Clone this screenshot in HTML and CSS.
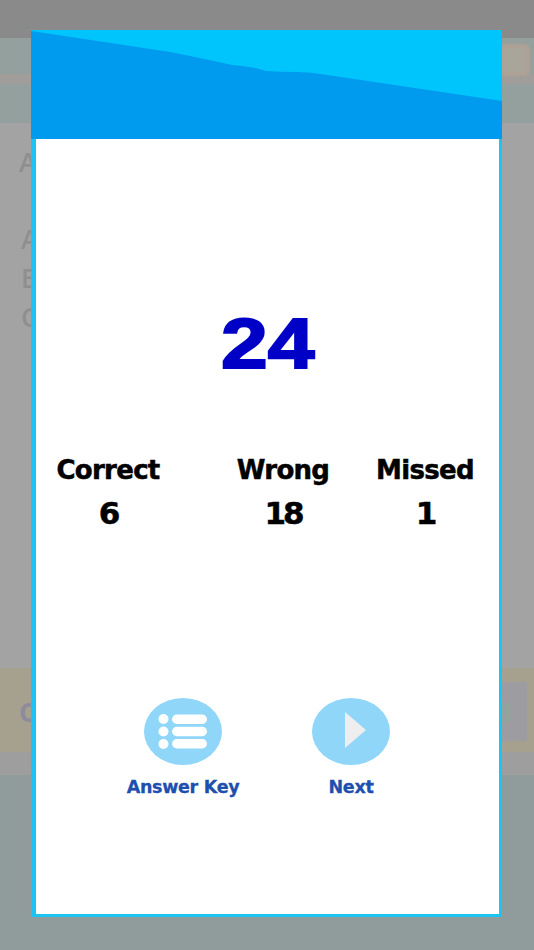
FILE: index.html
```html
<!DOCTYPE html>
<html lang="en">
<head>
<meta charset="utf-8">
<title>Result</title>
<link rel="stylesheet" href="styles.css">
</head>
<body>
<div class="screen">
  <div class="topbar"></div>
  <div class="band band-a"><div class="orange-btn"></div></div>
  <div class="band-gap"></div>
  <div class="band band-b"></div>
  <div class="question">
    <p class="q-title">A</p>
    <p class="q-opt q-a">A</p>
    <p class="q-opt q-b">B</p>
    <p class="q-opt q-c">C</p>
  </div>
  <div class="footer-card">
    <span class="footer-c">C</span>
    <div class="footer-box"><span>8</span></div>
  </div>
  <div class="footer-gap"></div>
  <div class="footer-fill"></div>

  <div class="modal">
    <svg class="wave" viewBox="0 0 471 109" preserveAspectRatio="none" aria-hidden="true">
      <rect width="471" height="109" fill="#00c4fc"/>
      <path d="M0 1 L139 22 Q170 28 201 35 Q220 36 235 41 Q250 42 265 42 Q280 42 296 45 L471 71 L471 109 L0 109 Z" fill="#009aee"/>
    </svg>
    <div class="modal-body">
      <div class="score">24</div>
      <div class="stats">
        <div class="stat"><span>Correct</span><strong>6</strong></div>
        <div class="stat"><span>Wrong</span><strong>18</strong></div>
        <div class="stat"><span>Missed</span><strong>1</strong></div>
      </div>
      <div class="actions">
        <div class="action">
          <svg class="disc" viewBox="0 0 78 67" aria-hidden="true">
            <ellipse cx="39" cy="33.5" rx="39" ry="33.5" fill="#8fd6f8"/>
            <circle cx="19.5" cy="21" r="5" fill="#fff"/>
            <circle cx="19.5" cy="33.5" r="5" fill="#fff"/>
            <circle cx="19.5" cy="46" r="5" fill="#fff"/>
            <rect x="28" y="16.5" width="35" height="9.5" rx="4.75" fill="#fff"/>
            <rect x="28" y="28.75" width="35" height="9.5" rx="4.75" fill="#fff"/>
            <rect x="28" y="41" width="35" height="9.5" rx="4.75" fill="#fff"/>
          </svg>
          <span>Answer Key</span>
        </div>
        <div class="action">
          <svg class="disc" viewBox="0 0 78 67" aria-hidden="true">
            <ellipse cx="39" cy="33.5" rx="39" ry="33.5" fill="#8fd6f8"/>
            <path d="M33 14 L54 32 L33 50 Z" fill="#eeeeee"/>
          </svg>
          <span>Next</span>
        </div>
      </div>
    </div>
  </div>
</div>
</body>
</html>
```
FILE: styles.css
```css
* { box-sizing: border-box; }
html, body { margin: 0; padding: 0; }
body { width: 534px; height: 950px; overflow: hidden; font-family: "DejaVu Sans", sans-serif; }
.screen { position: relative; width: 534px; height: 950px; display: flex; flex-direction: column; background: #a3a3a3; }
.topbar { height: 38px; background: #8a8a8a; }
.band { background: #93a09d; }
.band-a { height: 36px; position: relative; }
.orange-btn { position: absolute; right: 4px; top: 6px; width: 30px; height: 32px; background: #a9a59b; border: 4px solid #b0a194; border-radius: 6px; z-index: 1; filter: blur(1px); }
.band-gap { height: 10px; background: #a09d9b; }
.band-b { height: 39px; }
.question { height: 545px; background: #a3a3a3; color: #8f8f8f; font-family: "Open Sans", sans-serif; font-weight: 600; font-size: 27px; line-height: 38px; padding: 20px 0 0 19px; }
.question p { margin: 0; filter: blur(0.6px); }
.q-title { height: 77px; }
.q-opt { height: 39px; padding-left: 2px; }
.footer-card { height: 84px; background: #a6a08f; padding: 14px 7px 11px 19px; display: flex; align-items: center; justify-content: space-between; color: #8c8c9a; font-family: "Open Sans", sans-serif; font-weight: 700; font-size: 27px; }
.footer-box { width: 30px; height: 59px; background: #9d9da1; color: #93a49a; display: flex; align-items: center; }
.footer-gap { height: 23px; background: #9e9e9e; }
.footer-fill { flex: 1; background: #8f9c9b; }

.modal { position: absolute; left: 30.5px; top: 30px; width: 471.5px; height: 887px; display: flex; flex-direction: column; z-index: 2; }
.wave { display: block; width: 100%; height: 109px; flex: none; }
.modal-body { flex: 1; background: #fff; border-style: solid; border-color: #1cc4f4; border-width: 0 3.5px 3px 5px; display: flex; flex-direction: column; }
.score { margin-top: 167px; height: 76px; line-height: 76px; text-align: center; font-family: "Liberation Sans", sans-serif; font-weight: 700; font-size: 70px; color: #0000c6; -webkit-text-stroke: 2px #0000c6; transform: scaleX(1.2); }
.stats { margin-top: 71px; display: grid; grid-template-columns: 145px 205px 79px; }
.stat { display: flex; flex-direction: column; align-items: center; color: #000; font-weight: 700; }
.stat span { font-size: 26px; line-height: 34px; letter-spacing: -0.7px; white-space: nowrap; -webkit-text-stroke: 0.5px #000; }
.stat strong { font-size: 31px; line-height: 38px; margin-top: 7px; letter-spacing: -3px; -webkit-text-stroke: 0.5px #000; }
.actions { margin-top: 166px; display: flex; gap: 90px; padding-left: 108.5px; }
.action { width: 78px; display: flex; flex-direction: column; align-items: center; }
.disc { display: block; width: 78px; height: 67px; flex: none; }
.action span { margin-top: 9px; font-size: 17.5px; line-height: 26px; font-weight: 700; letter-spacing: -0.3px; color: #1e4fae; white-space: nowrap; -webkit-text-stroke: 0.3px #1e4fae; }
```
